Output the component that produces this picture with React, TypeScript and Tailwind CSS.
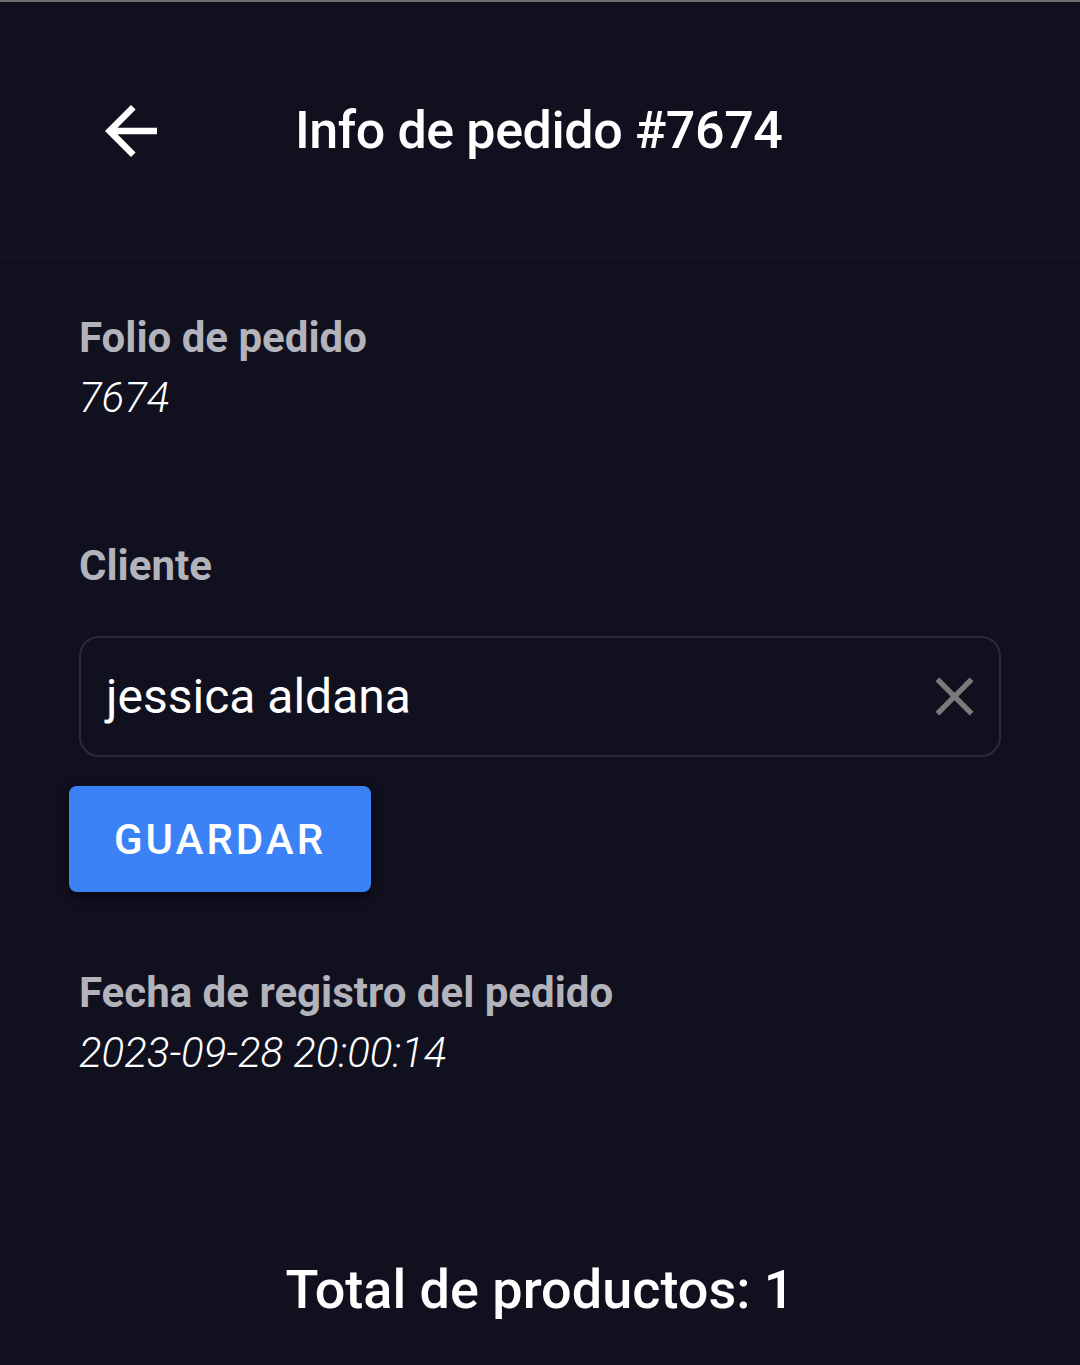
function Field({ label, value }: { label: string; value: string }) {
  return (
    <div>
      <div className="text-[42px] font-bold leading-[60px] text-[#b3b3bb]">{label}</div>
      <div className="text-[42px] font-light italic leading-[60px] text-white">{value}</div>
    </div>
  );
}

export default function App() {
  return (
    <div
      className="min-h-[1365px] w-full bg-[#10101f] text-white"
      style={{ fontFamily: 'Roboto, "Noto Sans", sans-serif' }}
    >
      <div className="h-[2px] bg-[#6e6e6e]" />

      {/* Header */}
      <div className="flex h-[256px] items-center border-b border-[#16162a] pt-[2px]">
        <button className="ml-[92px] flex h-[78px] w-[78px] items-center justify-center">
          <svg viewBox="0 0 24 24" className="h-[78px] w-[78px]" fill="white">
            <path d="M20 11H7.83l5.59-5.59L12 4l-8 8 8 8 1.41-1.41L7.83 13H20v-2z" />
          </svg>
        </button>
        <h1 className="ml-[125px] text-[52px] font-medium leading-none tracking-[-0.4px]">
          Info de pedido #7674
        </h1>
      </div>

      {/* Content */}
      <div className="px-[79px] pt-[50px]">
        <Field label="Folio de pedido" value="7674" />

        <div className="mt-[108px] text-[42px] font-bold leading-[60px] text-[#b3b3bb]">Cliente</div>

        <div className="mt-[40px] flex h-[121px] items-center rounded-[20px] border-2 border-[#2a2a3a] pl-[25px] pr-[12px]">
          <span className="flex-1 text-[48px] leading-none text-white">jessica aldana</span>
          <svg viewBox="0 0 24 24" className="h-[65px] w-[65px]" fill="#7a7a7a">
            <path d="M19 6.41L17.59 5 12 10.59 6.41 5 5 6.41 10.59 12 5 17.59 6.41 19 12 13.41 17.59 19 19 17.59 13.41 12z" />
          </svg>
        </div>

        <button className="-ml-[10px] mt-[29px] flex h-[106px] w-[302px] items-center justify-center rounded-[8px] bg-[#3b82f6] text-[42px] font-medium tracking-[3px] text-white shadow-[0_4px_8px_rgba(0,0,0,0.5)]">
          GUARDAR
        </button>

        <div className="mt-[71px]">
          <Field label="Fecha de registro del pedido" value="2023-09-28 20:00:14" />
        </div>

        <div className="mt-[180px] text-center text-[54px] font-medium leading-none">
          Total de productos: 1
        </div>
      </div>
    </div>
  );
}
